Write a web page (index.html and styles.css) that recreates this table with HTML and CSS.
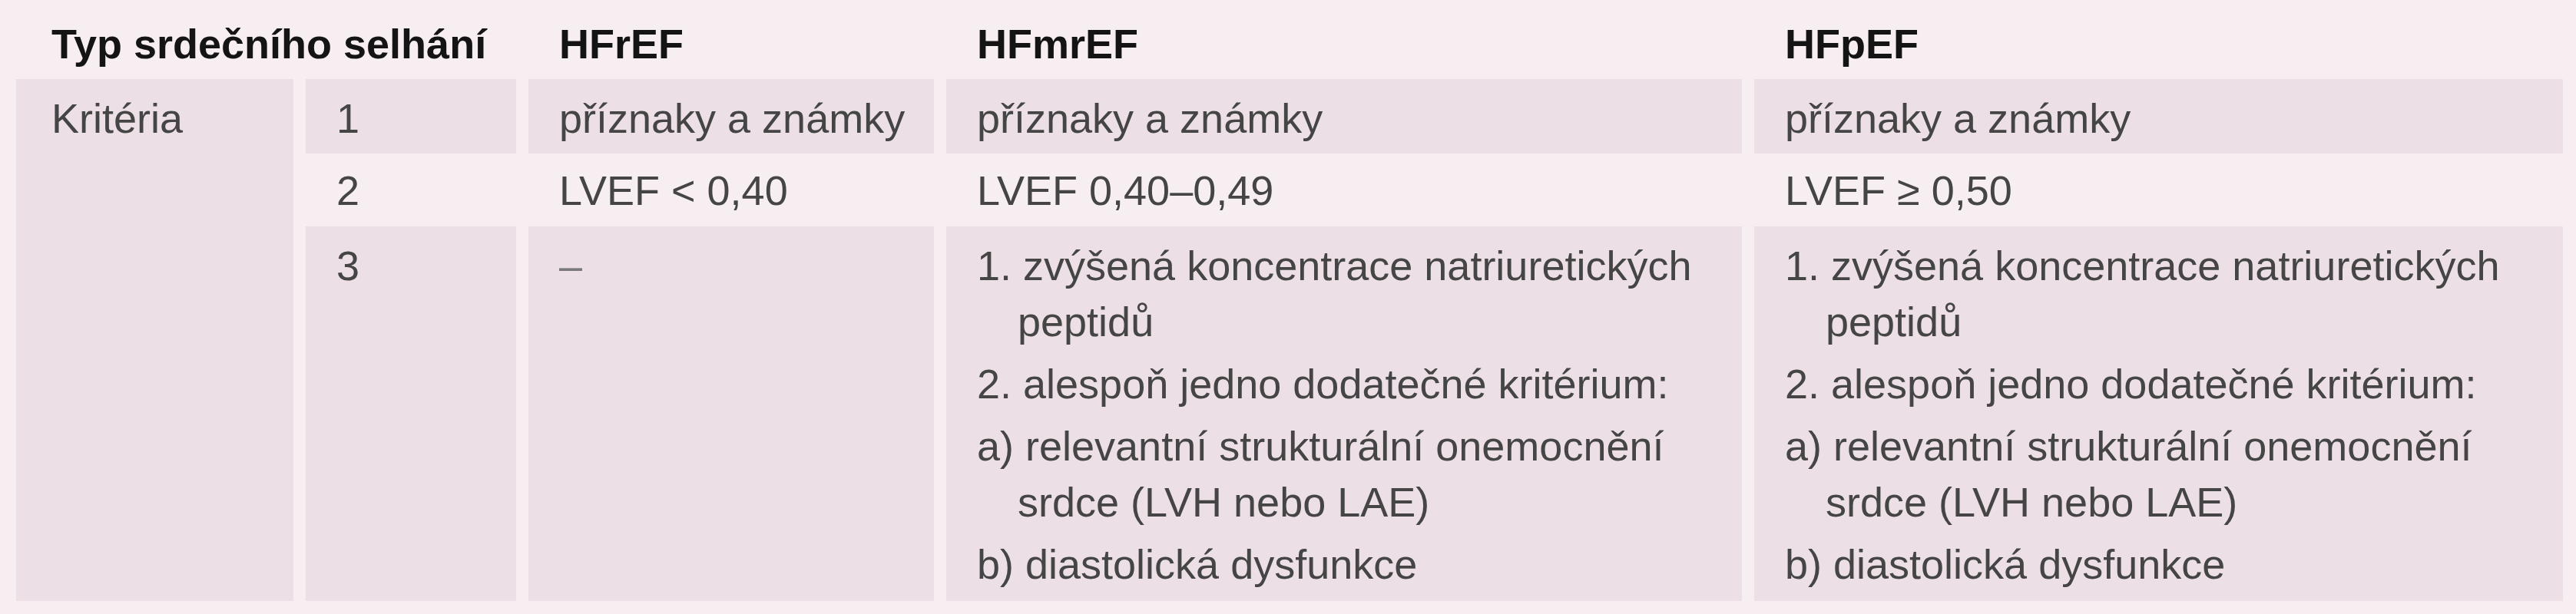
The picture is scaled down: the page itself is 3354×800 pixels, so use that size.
FILE: index.html
```html
<!DOCTYPE html>
<html lang="cs">
<head>
<meta charset="utf-8">
<title>Typ srdečního selhání</title>
<link rel="stylesheet" href="styles.css">
</head>
<body>
<div class="table">
  <div class="head span2">Typ srdečního selhání</div>
  <div class="head">HFrEF</div>
  <div class="head">HFmrEF</div>
  <div class="head">HFpEF</div>

  <div class="cell band first">Kritéria</div>

  <div class="cell band num">1</div>
  <div class="cell band">příznaky a známky</div>
  <div class="cell band">příznaky a známky</div>
  <div class="cell band">příznaky a známky</div>

  <div class="cell num r2">2</div>
  <div class="cell r2">LVEF &lt; 0,40</div>
  <div class="cell r2">LVEF 0,40–0,49</div>
  <div class="cell r2">LVEF ≥ 0,50</div>

  <div class="cell band num">3</div>
  <div class="cell band"><span class="dash">–</span></div>
  <div class="cell band">
    <div class="item">1. zvýšená koncentrace natriuretických peptidů</div>
    <div class="item">2. alespoň jedno dodatečné kritérium:</div>
    <div class="item">a) relevantní strukturální onemocnění srdce (LVH nebo LAE)</div>
    <div class="item">b) diastolická dysfunkce</div>
  </div>
  <div class="cell band">
    <div class="item">1. zvýšená koncentrace natriuretických peptidů</div>
    <div class="item">2. alespoň jedno dodatečné kritérium:</div>
    <div class="item">a) relevantní strukturální onemocnění srdce (LVH nebo LAE)</div>
    <div class="item">b) diastolická dysfunkce</div>
  </div>
</div>
</body>
</html>
```

FILE: styles.css
```css
html, body {
  margin: 0;
  padding: 0;
  background: #f6eef1;
}

body {
  font-family: "Liberation Sans", Arial, sans-serif;
  font-size: 54px;
  line-height: 73px;
  color: #454545;
}

.table {
  display: grid;
  grid-template-columns: 361px 274px 528px 1036px 1053px;
  grid-template-rows: 103px 97px 95px 488px;
  column-gap: 16px;
  padding-left: 21px;
  width: 3316px;
}

.head {
  font-weight: bold;
  color: #141414;
  padding: 21px 0 0 40px;
}

.head.span2 {
  grid-column: 1 / 3;
  padding-left: 46px;
}

.cell {
  padding: 15px 20px 0 40px;
}

.band {
  background: #ecdfe5;
}

.first {
  grid-column: 1;
  grid-row: 2 / 5;
  padding-left: 46px;
}

.num {
  padding-left: 40px;
}

.r2 {
  padding-top: 12px;
}

.dash {
  color: #7a7a7a;
}

.item {
  padding-left: 53px;
  text-indent: -53px;
  margin-bottom: 8px;
}
```
